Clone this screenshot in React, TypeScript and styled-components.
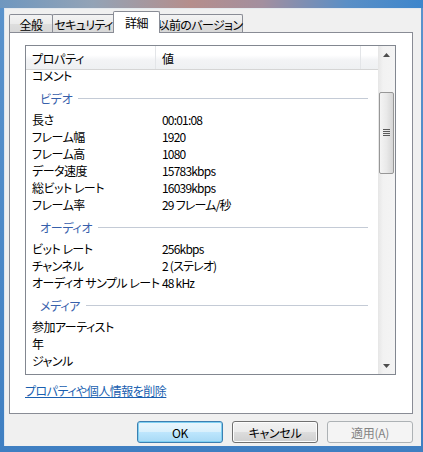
import React from 'react';
import styled, { createGlobalStyle } from 'styled-components';

const GlobalStyle = createGlobalStyle`
  body {
    margin: 0;
    font-family: "Noto Sans CJK JP", "Noto Sans", sans-serif;
    font-size: 12px;
    color: #000;
  }
`;

const Frame = styled.div`
  width: 423px;
  height: 452px;
  box-sizing: border-box;
  padding: 8px 2px 6px 4px;
  display: flex;
  background:
    linear-gradient(90deg, #6f97bf 0%, #93a3b6 22%, #b58e8c 45%, #a38f9f 62%, #5a8fc6 82%, #3d86cc 100%) top / 100% 8px no-repeat,
    linear-gradient(180deg, #5b93cc, #3f7fc2);
`;

const Dialog = styled.div`
  flex: 1;
  display: flex;
  flex-direction: column;
  background: #f0f0f0;
  border-left: 1px solid #dce6f0;
  border-top: 1px solid #e4e9ee;
`;

const TabStrip = styled.div`
  display: flex;
  align-items: flex-end;
  padding: 2px 0 0 4px;
  margin-bottom: -1px;
  position: relative;
  z-index: 1;
`;

const Tab = styled.div<{ $w: number; $active?: boolean }>`
  width: ${(p) => p.$w}px;
  box-sizing: border-box;
  height: ${(p) => (p.$active ? 22 : 18)}px;
  margin: ${(p) => (p.$active ? '0 -2px 0 -2px' : '0 0 1px -1px')};
  border: 1px solid #898c95;
  border-bottom: none;
  border-radius: 2px 2px 0 0;
  background: ${(p) =>
    p.$active ? '#fff' : 'linear-gradient(180deg, #f3f3f3 0%, #ebebeb 50%, #dedede 51%, #d8d8d8 100%)'};
  display: flex;
  align-items: center;
  justify-content: center;
  font-size: 12px;
  font-feature-settings: "palt";
  letter-spacing: -0.6px;
  white-space: nowrap;
  padding-top: ${(p) => (p.$active ? 0 : 1)}px;
  position: relative;
  z-index: ${(p) => (p.$active ? 2 : 1)};
  &:first-child {
    margin-left: 0;
  }
`;

const Panel = styled.div`
  height: 382px;
  box-sizing: border-box;
  margin: 0 8px 0 4px;
  border: 1px solid #898c95;
  background: #fff;
  padding: 12px 0 0 15px;
  display: flex;
  flex-direction: column;
`;

const List = styled.div`
  width: 371px;
  height: 330px;
  box-sizing: border-box;
  border: 1px solid #828790;
  display: flex;
  overflow: hidden;
`;

const ListMain = styled.div`
  flex: 1;
  display: flex;
  flex-direction: column;
  overflow: hidden;
`;

const HeaderRow = styled.div`
  height: 24px;
  flex-shrink: 0;
  box-sizing: border-box;
  display: flex;
  background: linear-gradient(180deg, #ffffff 0%, #ffffff 40%, #f3f4f6 60%, #eef0f2 100%);
  border-bottom: 1px solid #d5d5d5;
  position: relative;
  z-index: 1;
`;

const HeaderCell = styled.div<{ $w?: number }>`
  ${(p) => (p.$w ? `width: ${p.$w}px;` : 'flex: 1;')}
  box-sizing: border-box;
  padding: 2px 0 0 6px;
  display: flex;
  align-items: center;
  border-right: 1px solid #e3e5e8;
  font-feature-settings: "palt";
  letter-spacing: -0.3px;
  &:last-child {
    border-right: none;
  }
`;

const Body = styled.div`
  margin-top: -3px;
  display: flex;
  flex-direction: column;
`;

const Row = styled.div`
  height: 17px;
  flex-shrink: 0;
  display: flex;
  align-items: center;
  font-feature-settings: "palt";
  white-space: nowrap;
`;

const PropCell = styled.div`
  width: 130px;
  box-sizing: border-box;
  padding-left: 6px;
  letter-spacing: -0.5px;
`;

const ValueCell = styled.div`
  padding-left: 6px;
  letter-spacing: -0.8px;
`;

const Group = styled.div`
  height: 27px;
  flex-shrink: 0;
  box-sizing: border-box;
  padding: 6px 10px 4px 14px;
  display: flex;
  align-items: center;
  gap: 6px;
  color: #3760ab;
  font-feature-settings: "palt";
  letter-spacing: -0.3px;
  &::after {
    content: '';
    flex: 1;
    height: 1px;
    background: #c4cbd6;
  }
`;

const ScrollBar = styled.div`
  width: 17px;
  display: flex;
  flex-direction: column;
  align-items: center;
  background: linear-gradient(90deg, #e6e6e6 0%, #f2f2f2 30%, #f4f4f4 100%);
`;

const Arrow = styled.div`
  height: 17px;
  width: 17px;
  display: flex;
  align-items: center;
  justify-content: center;
`;

const Track = styled.div`
  flex: 1;
  width: 100%;
  display: flex;
  flex-direction: column;
  align-items: center;
`;

const Thumb = styled.div`
  margin-top: 29px;
  width: 15px;
  height: 82px;
  box-sizing: border-box;
  border: 1px solid #979797;
  border-radius: 2px;
  background: linear-gradient(90deg, #f4f4f4 0%, #e9e9e9 50%, #d6d6d6 100%);
  display: flex;
  align-items: center;
  justify-content: center;
`;

const Link = styled.a`
  margin-top: 8px;
  color: #1a5fb0;
  text-decoration: underline;
  font-feature-settings: "palt";
  line-height: 16px;
  letter-spacing: -0.5px;
  cursor: pointer;
`;

const ButtonRow = styled.div`
  display: flex;
  justify-content: flex-end;
  gap: 9px;
  margin: 7px 8px 0 0;
`;

const Button = styled.button<{ $default?: boolean }>`
  width: 86px;
  height: 22px;
  box-sizing: border-box;
  padding: 0;
  font-family: inherit;
  font-size: 12px;
  font-feature-settings: "palt";
  letter-spacing: -0.3px;
  border-radius: 3px;
  color: ${(p) => (p.disabled ? '#838383' : '#000')};
  border: 1px solid ${(p) => (p.$default ? '#3c7fb1' : p.disabled ? '#adb2b5' : '#707070')};
  background: ${(p) =>
    p.disabled
      ? '#f4f4f4'
      : p.$default
      ? 'linear-gradient(180deg, #eaf6fd 0%, #d9f0fc 50%, #bee6fd 51%, #a7d9f5 100%)'
      : 'linear-gradient(180deg, #f2f2f2 0%, #ebebeb 50%, #dddddd 51%, #cfcfcf 100%)'};
  box-shadow: ${(p) => (p.$default ? 'inset 0 0 0 1px #7fd0f2' : p.disabled ? 'none' : 'inset 0 0 0 1px #fcfcfc')};
`;

const Triangle = ({ up }: { up?: boolean }) => (
  <svg width="7" height="4" viewBox="0 0 7 4">
    <path d={up ? 'M0 4 L3.5 0 L7 4 Z' : 'M0 0 L7 0 L3.5 4 Z'} fill="#4d4d4d" />
  </svg>
);

const Grip = () => (
  <svg width="7" height="8" viewBox="0 0 7 8">
    {[0, 2, 4, 6].map((y) => (
      <rect key={y} x="0" y={y} width="7" height="1" fill="#5a5a5a" />
    ))}
  </svg>
);

type Item = { kind: 'row'; name: string; value?: string } | { kind: 'group'; name: string };

const items: Item[] = [
  { kind: 'row', name: 'コメント' },
  { kind: 'group', name: 'ビデオ' },
  { kind: 'row', name: '長さ', value: '00:01:08' },
  { kind: 'row', name: 'フレーム幅', value: '1920' },
  { kind: 'row', name: 'フレーム高', value: '1080' },
  { kind: 'row', name: 'データ速度', value: '15783kbps' },
  { kind: 'row', name: '総ビット レート', value: '16039kbps' },
  { kind: 'row', name: 'フレーム率', value: '29 フレーム/秒' },
  { kind: 'group', name: 'オーディオ' },
  { kind: 'row', name: 'ビット レート', value: '256kbps' },
  { kind: 'row', name: 'チャンネル', value: '2 (ステレオ)' },
  { kind: 'row', name: 'オーディオ サンプル レート', value: '48 kHz' },
  { kind: 'group', name: 'メディア' },
  { kind: 'row', name: '参加アーティスト' },
  { kind: 'row', name: '年' },
  { kind: 'row', name: 'ジャンル' },
];

export default function App() {
  return (
    <>
      <GlobalStyle />
      <Frame>
        <Dialog>
          <TabStrip>
            <Tab $w={44}>全般</Tab>
            <Tab $w={63}>セキュリティ</Tab>
            <Tab $w={47} $active>詳細</Tab>
            <Tab $w={86}>以前のバージョン</Tab>
          </TabStrip>
          <Panel>
            <List>
              <ListMain>
                <HeaderRow>
                  <HeaderCell $w={130}>プロパティ</HeaderCell>
                  <HeaderCell $w={205}>値</HeaderCell>
                  <HeaderCell />
                </HeaderRow>
                <Body>
                  {items.map((it, i) =>
                    it.kind === 'group' ? (
                      <Group key={i}>{it.name}</Group>
                    ) : (
                      <Row key={i}>
                        <PropCell>{it.name}</PropCell>
                        <ValueCell>{it.value}</ValueCell>
                      </Row>
                    )
                  )}
                </Body>
              </ListMain>
              <ScrollBar>
                <Arrow>
                  <Triangle up />
                </Arrow>
                <Track>
                  <Thumb>
                    <Grip />
                  </Thumb>
                </Track>
                <Arrow>
                  <Triangle />
                </Arrow>
              </ScrollBar>
            </List>
            <Link>プロパティや個人情報を削除</Link>
          </Panel>
          <ButtonRow>
            <Button $default>OK</Button>
            <Button>キャンセル</Button>
            <Button disabled>適用(A)</Button>
          </ButtonRow>
        </Dialog>
      </Frame>
    </>
  );
}
